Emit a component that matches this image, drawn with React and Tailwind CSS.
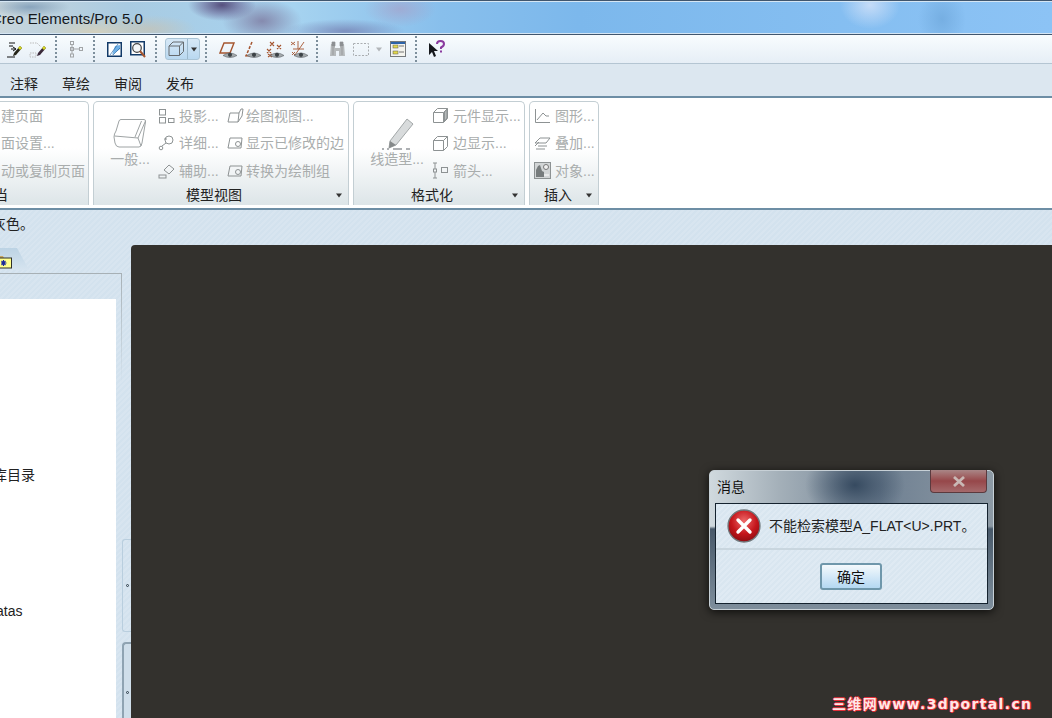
import React from "react";

const Sep = ({ m }) => (
  <div className={`w-[2px] h-[26px] border-l-2 border-dotted border-[#7d8f9c] ${m}`} />
);

const Eye = () => (
  <g>
    <path d="M3 13.5 Q10 8.5 17 13.5 Q10 17.5 3 13.5Z" fill="#a3a9ac" stroke="#5a6064" strokeWidth=".6" />
    <circle cx="10" cy="12.8" r="2.1" fill="#3c4246" />
  </g>
);

const Arrow = ({ className = "" }) => (
  <svg width="8" height="5" viewBox="0 0 8 5" className={className}>
    <path d="M1 0.5H7L4 4.5Z" fill="#333" />
  </svg>
);

const RibbonIcons = {
  proj: (
    <svg width="17" height="16" viewBox="0 0 17 16" fill="none" stroke="#8d9293">
      <rect x="1.5" y="1.5" width="6" height="5.5" />
      <rect x="1.5" y="9.5" width="6" height="5.5" />
      <rect x="10.5" y="10.5" width="5.5" height="4" />
    </svg>
  ),
  detail: (
    <svg width="17" height="16" viewBox="0 0 17 16" fill="none" stroke="#8d9293">
      <circle cx="11" cy="5" r="4" />
      <circle cx="3" cy="13" r="1.8" />
      <path d="M4 11 L8 8 M6 4 h3" />
    </svg>
  ),
  aux: (
    <svg width="17" height="16" viewBox="0 0 17 16" fill="none" stroke="#8d9293">
      <path d="M6 7 L11 2 L16 6 L11 11Z" />
      <rect x="1" y="12" width="7" height="3" />
    </svg>
  ),
  draw: (
    <svg width="17" height="16" viewBox="0 0 17 16" fill="none" stroke="#8d9293">
      <path d="M3 5 H12 L11 14 H1Z" />
      <path d="M12 5 L14 1 H16 L15 8 L11 14" />
    </svg>
  ),
  box: (
    <svg width="17" height="16" viewBox="0 0 17 16" fill="none" stroke="#8d9293">
      <path d="M3 3 H15 L14 13 H1Z" />
      <circle cx="11" cy="9" r="2.5" />
    </svg>
  ),
  comp: (
    <svg width="17" height="17" viewBox="0 0 17 17" fill="none" stroke="#8d9293">
      <path d="M1.5 5.5 L5.5 1.5 H15.5 V11.5 L11.5 15.5 H1.5Z" />
      <path d="M1.5 5.5 H11.5 V15.5 M11.5 5.5 L15.5 1.5" />
      <path d="M12.5 5 L15 2.5 V11 L12.5 14Z" fill="#b5b9ba" />
    </svg>
  ),
  edge: (
    <svg width="17" height="17" viewBox="0 0 17 17" fill="none" stroke="#8d9293">
      <path d="M1.5 5.5 L5.5 1.5 H15.5 V11.5 L11.5 15.5 H1.5Z" />
      <path d="M1.5 5.5 H11.5 V15.5 M11.5 5.5 L15.5 1.5" />
    </svg>
  ),
  arrow: (
    <svg width="17" height="17" viewBox="0 0 17 17" fill="none" stroke="#8d9293">
      <path d="M5 1 H1 M3 1 V7 M3 10 V16 M5 16 H1" />
      <rect x="1.5" y="7" width="3" height="3" />
      <rect x="9.5" y="5.5" width="6" height="5" />
    </svg>
  ),
  graph: (
    <svg width="17" height="16" viewBox="0 0 17 16" fill="none" stroke="#8d9293">
      <path d="M1.5 1 V14.5 H16" />
      <path d="M3 12 L9 5 L12 8 L15 8" />
    </svg>
  ),
  overlay: (
    <svg width="17" height="16" viewBox="0 0 17 16" fill="none" stroke="#8d9293">
      <path d="M1 8 L6 3 H16 L12 8Z" />
      <path d="M1 11 L5 7 M4 11 H13 M2 14 H11" />
    </svg>
  ),
  obj: (
    <svg width="17" height="17" viewBox="0 0 17 17">
      <rect x="0.5" y="0.5" width="16" height="16" fill="#d2d5d6" stroke="#8d9293" />
      <circle cx="12" cy="5" r="2.5" fill="#f0f0f0" stroke="#777" />
      <path d="M2 15 V8 L4 4 L6 3 L8 9 L10 10 V15Z" fill="#777c7d" />
      <path d="M10 13 H15" stroke="#fff" />
    </svg>
  ),
};

const Row = ({ icon, text, iw = "w-[21px]" }) => (
  <div className="flex items-center h-[27.5px] whitespace-nowrap">
    <span className={`${iw} shrink-0 flex`}>{icon}</span>
    <span>{text}</span>
  </div>
);

const Group = ({ w, ml = "ml-[4px]", title, arrow, titleClass, children }) => (
  <div
    className={`${w} ${ml} shrink-0 h-[104px] flex flex-col rounded-t-[5px] border border-b-0 border-[#c3ced3] bg-gradient-to-b from-white from-[45%] to-[#dde5e8] text-[#a9adad]`}
  >
    <div className="h-[83px] flex">{children}</div>
    <div className={`relative flex-1 flex items-center text-[#222] ${titleClass}`}>
      <span>{title}</span>
      {arrow}
    </div>
  </div>
);

export default function App() {
  return (
    <div className="relative w-[1052px] h-[718px] overflow-hidden flex flex-col bg-[#d6e4ef] text-[14px] leading-none font-['Liberation_Sans','Noto_Sans_CJK_SC',sans-serif]">
      {/* wallpaper title bar */}
      <div className="h-[35px] shrink-0 flex items-center pt-[1px] border-y border-[#40566e] shadow-[inset_0_1px_0_#d5e6f4,inset_0_-1px_0_#d5e6f4] bg-[radial-gradient(ellipse_34px_16px_at_222px_4px,#56507e_0%,#6e6c9a99_55%,transparent_100%),radial-gradient(ellipse_40px_22px_at_262px_20px,#7d799fcc_0%,transparent_100%),radial-gradient(ellipse_60px_12px_at_345px_30px,#6f76aab0_0%,transparent_100%),radial-gradient(ellipse_36px_18px_at_400px_8px,#a89cc499_0%,transparent_100%),radial-gradient(ellipse_46px_14px_at_150px_28px,#c9c2b0aa_0%,transparent_100%),radial-gradient(ellipse_40px_10px_at_30px_6px,#7a98b4cc_0%,transparent_100%),radial-gradient(ellipse_60px_18px_at_95px_32px,#dcd0b2cc_0%,transparent_100%),radial-gradient(ellipse_30px_24px_at_870px_4px,#cfe0f8dd_0%,transparent_100%),radial-gradient(ellipse_24px_30px_at_942px_18px,#6fa8dcbb_0%,transparent_100%),linear-gradient(90deg,#c9d6dc_0%,#a9cbe2_12%,#a6d3f0_28%,#88bfec_42%,#7cb8ec_55%,#8cc3f5_100%)]">
        <span className="-ml-[9px] text-[15px] text-[#15181c] whitespace-nowrap">Creo Elements/Pro 5.0</span>
      </div>

      {/* toolbar */}
      <div className="h-[29px] shrink-0 flex items-center border-b border-[#b4c5d2] bg-gradient-to-b from-[#f8fcfe] to-[#e6eef6]">
        <svg width="17" height="17" viewBox="0 0 17 17" className="ml-[6px]">
          <path d="M3 2 H9 M3 5 H7 M1 16 H9 M5 8 H9 M7 6 L10 8 L7 10" stroke="#111" fill="none" />
          <path d="M8 12 L14 5 L16 7 L10 14 L7 15Z" fill="#26261a" />
          <path d="M12 7 L14 5 L16 7 L14 9Z" fill="#d5d622" />
        </svg>
        <svg width="18" height="17" viewBox="0 0 18 17" className="ml-[6px]">
          <path d="M1 2 H8 L12 6 M1 12 H7 V16 H1Z" stroke="#bbb" fill="none" strokeDasharray="1.5 1" />
          <path d="M9 12 L15 5 L17 7 L11 14 L8 15Z" fill="#3a2a3a" />
          <path d="M13 7 L15 5 L17 7 L15 9Z" fill="#d5d622" />
        </svg>
        <Sep m="ml-[8px]" />
        <svg width="15" height="17" viewBox="0 0 15 17" fill="none" stroke="#a2a5a7" className="ml-[12px]">
          <rect x="1.5" y="0.5" width="3" height="3" />
          <rect x="1.5" y="6.5" width="3" height="3" />
          <rect x="1.5" y="13" width="3" height="3" />
          <rect x="10.5" y="6.5" width="3" height="3" />
          <path d="M3 4 V13 M5 8 H10" />
        </svg>
        <Sep m="ml-[9px]" />
        <svg width="15" height="15" viewBox="0 0 15 15" className="ml-[12px]">
          <rect x="0.75" y="0.75" width="13.5" height="13.5" fill="#fff" stroke="#123a68" strokeWidth="1.5" />
          <path d="M5 13 L8 4 L13 3 V7 Z" fill="#6fb0e6" />
          <path d="M3 13 L11 2 M6 13 L13 6" stroke="#2b6ca8" strokeWidth=".7" />
        </svg>
        <svg width="16" height="17" viewBox="0 0 16 17" className="ml-[8px]">
          <rect x="0.75" y="0.75" width="13.5" height="13" fill="#fff" stroke="#123a68" strokeWidth="1.5" />
          <circle cx="7" cy="7" r="4.3" fill="#f4f7f9" stroke="#444" strokeWidth="1.2" />
          <path d="M10 10 L15 16" stroke="#a5552f" strokeWidth="2" />
        </svg>
        <Sep m="ml-[9px]" />
        <div className="ml-[8px] w-[35px] h-[22px] flex rounded-[3px] border border-[#a9c4d6] bg-gradient-to-b from-[#d6e8f6] to-[#b9d8f0]">
          <div className="w-[22px] flex items-center justify-center border-r border-[#9bb8cc]">
            <svg width="17" height="16" viewBox="0 0 17 16" fill="none" stroke="#666b6f">
              <path d="M1 5 L5 1 H15.5 V10.5 L11.5 14.5 H1Z" />
              <path d="M1 5 H11.5 V14.5 M11.5 5 L15.5 1" />
            </svg>
          </div>
          <div className="flex-1 flex items-center justify-center"><Arrow /></div>
        </div>
        <Sep m="ml-[5px]" />
        <svg width="18" height="17" viewBox="0 0 18 17" className="ml-[12px]">
          <path d="M5 2 H15 L11 12 H1Z" fill="none" stroke="#a5552f" strokeWidth="1.4" />
          <g transform="translate(1,1)"><Eye /></g>
        </svg>
        <svg width="17" height="17" viewBox="0 0 17 17" className="ml-[7px]">
          <path d="M8 1 L2 15" stroke="#a5552f" strokeWidth="1.5" strokeDasharray="3 1.5" />
          <path d="M1 15 H7" stroke="#a5552f" />
          <g transform="translate(0,1)"><Eye /></g>
        </svg>
        <svg width="18" height="17" viewBox="0 0 18 17" className="ml-[5px]">
          <path d="M4 1 L8 5 M8 1 L4 5 M11 4 L15 8 M15 4 L11 8 M1 8 L5 12 M5 8 L1 12 M2 13 L6 16 M6 13 L2 16" stroke="#a5552f" strokeWidth="1.1" />
          <g transform="translate(1,1)"><Eye /></g>
        </svg>
        <svg width="18" height="17" viewBox="0 0 18 17" className="ml-[6px]">
          <path d="M1 1 L5 4 M5 1 L1 4 M8 0 V8 M3 8 H14 M14 1 L5 14 M2 11 L5 14 M5 11 L2 14" stroke="#a5552f" strokeWidth=".9" />
          <g transform="translate(1,1)"><Eye /></g>
        </svg>
        <Sep m="ml-[8px]" />
        <svg width="17" height="17" viewBox="0 0 17 17" className="ml-[11px]">
          <path d="M2 3 H6 V7 H11 V3 H15 L16 15 H10 V10 H7 V15 H1Z" fill="#b5b9bb" />
          <path d="M3 1 H6 V5 H3Z M11 1 H14 V5 H11Z M4 6 V14 M13 6 V14" fill="#8c9092" stroke="#8c9092" strokeWidth=".7" />
        </svg>
        <svg width="16" height="13" viewBox="0 0 16 13" fill="none" stroke="#a9adb0" strokeDasharray="2 1.5" className="ml-[7px]">
          <rect x="0.5" y="0.5" width="15" height="12" />
        </svg>
        <svg width="8" height="5" viewBox="0 0 8 5" className="ml-[6px]"><path d="M1 0.5H7L4 4.5Z" fill="#b2b6b9" /></svg>
        <svg width="16" height="16" viewBox="0 0 16 16" className="ml-[7px]">
          <rect x="0.5" y="0.5" width="15" height="15" fill="#f4f4ee" stroke="#75797c" />
          <rect x="1" y="1" width="14" height="2" fill="#2c63a8" />
          <rect x="3" y="4" width="5" height="3" fill="#e3d94a" stroke="#555" strokeWidth=".5" />
          <rect x="3" y="10" width="5" height="3" fill="#e3d94a" stroke="#555" strokeWidth=".5" />
          <path d="M9 5 H14 M9 11 H14" stroke="#777" />
        </svg>
        <Sep m="ml-[9px]" />
        <svg width="18" height="18" viewBox="0 0 18 18" className="ml-[11px]">
          <path d="M1 3 L10 11 H6 L8 16 L6 17 L4 12 L1 15Z" fill="#15181c" />
          <path d="M9 4 Q9 1 12.5 1 Q16 1 16 4 Q16 6 13 7.5 V9" fill="none" stroke="#8a3a9e" strokeWidth="2" />
          <rect x="12" y="10.5" width="2" height="2" fill="#8a3a9e" />
        </svg>
      </div>

      {/* tabs */}
      <div className="h-[34px] shrink-0 flex items-center gap-[24px] pl-[10px] pt-[7px] bg-[#dce7f0] border-b-2 border-[#6d8ea5] text-[#222]">
        <span>注释</span>
        <span>草绘</span>
        <span>审阅</span>
        <span>发布</span>
      </div>

      {/* ribbon */}
      <div className="h-[112px] shrink-0 flex items-start pt-[3px] bg-white border-b-2 border-[#6d8ea5]">
        <Group w="w-[96px]" ml="-ml-[7px]" title="当" titleClass="">
          <div className="pl-[7px] whitespace-nowrap">
            <div className="flex items-center h-[27.5px]">建页面</div>
            <div className="flex items-center h-[27.5px]">面设置...</div>
            <div className="flex items-center h-[27.5px]">动或复制页面</div>
          </div>
        </Group>
        <Group
          w="w-[256px]"
          title="模型视图"
          titleClass="justify-center pr-[14px]"
          arrow={<Arrow className="absolute right-[5px] top-[8px]" />}
        >
          <div className="w-[64px] shrink-0 flex flex-col items-center pt-[16px] pl-[8px]">
            <svg width="34" height="31" viewBox="0 0 34 31" fill="none" stroke="#9ea3a4">
              <path d="M8 1.5 H31 Q33 1.5 32.5 4 L29 25 Q28.5 29 26 29 H6 Q3 29 2 25 L1 19 Q1 16 3 13 L6 3 Q6.5 1.5 8 1.5Z" />
              <path d="M1.5 18 L25 20 L28 28 M25 20 L32.5 3 M28.5 3 L22 19" />
            </svg>
            <span className="mt-[3px] whitespace-nowrap">一般...</span>
          </div>
          <div className="w-[69px] shrink-0">
            <Row icon={RibbonIcons.proj} text="投影..." />
            <Row icon={RibbonIcons.detail} text="详细..." />
            <Row icon={RibbonIcons.aux} text="辅助..." />
          </div>
          <div>
            <Row icon={RibbonIcons.draw} iw="w-[19px]" text="绘图视图..." />
            <Row icon={RibbonIcons.box} iw="w-[19px]" text="显示已修改的边" />
            <Row icon={RibbonIcons.box} iw="w-[19px]" text="转换为绘制组" />
          </div>
        </Group>
        <Group
          w="w-[172px]"
          title="格式化"
          titleClass="justify-center pr-[14px]"
          arrow={<Arrow className="absolute right-[5px] top-[8px]" />}
        >
          <div className="w-[78px] shrink-0 flex flex-col items-center pt-[15px] pl-[8px]">
            <svg width="34" height="34" viewBox="0 0 34 34">
              <path d="M10 24 L27 2 L33 7 L16 28 L9 31Z" fill="#d8dbdc" stroke="#a2a7a8" />
              <path d="M10 24 L16 28 L9 31Z" fill="#85898a" />
              <path d="M2 32 H4 M7 32 H9 M13 32 H22 M26 32 H30" stroke="#93979a" strokeWidth="1.5" />
            </svg>
            <span className="mt-[1px] whitespace-nowrap">线造型...</span>
          </div>
          <div>
            <Row icon={RibbonIcons.comp} text="元件显示..." />
            <Row icon={RibbonIcons.edge} text="边显示..." />
            <Row icon={RibbonIcons.arrow} text="箭头..." />
          </div>
        </Group>
        <Group
          w="w-[70px]"
          title="插入"
          titleClass="pl-[14px]"
          arrow={<Arrow className="absolute right-[5px] top-[8px]" />}
        >
          <div className="pl-[4px]">
            <Row icon={RibbonIcons.graph} text="图形..." />
            <Row icon={RibbonIcons.overlay} text="叠加..." />
            <Row icon={RibbonIcons.obj} text="对象..." />
          </div>
        </Group>
      </div>

      {/* striped workspace */}
      <div className="flex-1 min-h-0 flex flex-col bg-[repeating-linear-gradient(135deg,#d3e2ee_0px,#d3e2ee_2px,#d8e5f0_2px,#d8e5f0_4px)]">
        <div className="h-[35px] shrink-0 flex items-center -ml-[8px] pb-[7px] text-[#222] whitespace-nowrap">灰色。</div>
        <div className="flex-1 min-h-0 flex">
          <div className="w-[122px] shrink-0 flex flex-col">
            <div className="h-[28px] shrink-0 pt-[3px] relative">
              <div className="w-[29px] h-[22px] bg-gradient-to-b from-[#bcd3e4] to-[#d6e4ef] [clip-path:polygon(0_0,17px_0,29px_100%,0_100%)]" />
              <svg width="13" height="14" viewBox="0 0 13 14" className="absolute left-0 top-[10px]">
                <path d="M0 3 V1 H3 L4 3Z" fill="#c7a765" />
                <rect x="-1" y="3" width="12.5" height="10" fill="#ffff8c" stroke="#30302a" />
                <path d="M3.5 5 V11 M1 8 H6.5 M1.5 6 L5.5 10 M5.5 6 L1.5 10" stroke="#1c2a9a" strokeWidth="1.1" />
              </svg>
            </div>
            <div className="relative flex-1 min-h-0 flex flex-col border-t border-[#a7b0b5]">
              <div className="absolute right-0 -top-px w-px h-[110px] rounded-tr-[3px] bg-gradient-to-b from-[#a7b0b5] to-transparent" />
              <div className="h-[25px] shrink-0" />
              <div className="w-[116px] flex-1 bg-white text-[#222] whitespace-nowrap">
                <div className="-ml-[7px] mt-[169px]">库目录</div>
                <div className="-ml-[4px] mt-[122px]">atas</div>
              </div>
            </div>
          </div>
          <div className="w-[9px] shrink-0 pt-[294px] flex flex-col gap-[10px]">
            <div className="h-[93px] shrink-0 flex items-center justify-center rounded-l-[3px] border border-r-0 border-[#b9cede]">
              <span className="w-[3px] h-[3px] rounded-full border border-[#2c3c48]" />
            </div>
            <div className="flex-1 pt-[47px] flex justify-center rounded-tl-[4px] border-l-2 border-t-2 border-[#8fa3b2] bg-[#cfdeea]">
              <span className="w-[3px] h-[3px] rounded-full border border-[#2c3c48]" />
            </div>
          </div>
          <div className="flex-1 rounded-tl-[4px] bg-[#33312d]" />
        </div>
      </div>

      {/* dialog */}
      <div className="absolute left-[709px] top-[470px] w-[285px] h-[140px] flex flex-col rounded-[5px] border border-[#c7d0d6] shadow-[0_2px_10px_rgba(0,0,0,0.75)] bg-[radial-gradient(ellipse_50px_36px_at_145px_14px,#364a60_0%,transparent_100%),linear-gradient(180deg,transparent_40%,#48596a_42%,#7e8e9c_100%),linear-gradient(90deg,#d0d9de_0%,#a3afb8_25%,#6f8092_60%,#8c99a4_100%)]">
        <div className="h-[32px] shrink-0 flex items-center pl-[7px] text-[#111]">消息</div>
        <div className="absolute right-[6px] -top-px w-[57px] h-[23px] flex items-center justify-center rounded-b-[4px] border border-t-0 border-[#5b3a3e] bg-gradient-to-b from-[#a98687] via-[#96474a] to-[#a56a6c]">
          <svg width="14" height="11" viewBox="0 0 14 11">
            <path d="M2 1 L12 10 M12 1 L2 10" stroke="#c9b8b5" strokeWidth="2.8" />
          </svg>
        </div>
        <div className="mx-[5px] mb-[5px] flex-1 flex flex-col border border-[#14222e] bg-[repeating-linear-gradient(135deg,#d9e6f0_0px,#d9e6f0_2px,#dfeaf3_2px,#dfeaf3_4px)] text-[#222]">
          <div className="h-[46px] shrink-0 flex items-center pl-[11px] border-b-2 border-[#c9d6df]">
            <svg width="34" height="34" viewBox="0 0 34 34">
              <defs>
                <radialGradient id="err" cx="50%" cy="35%" r="65%">
                  <stop offset="0%" stopColor="#ee6a6a" />
                  <stop offset="60%" stopColor="#c5161c" />
                  <stop offset="100%" stopColor="#8e0d12" />
                </radialGradient>
              </defs>
              <circle cx="17" cy="17" r="16" fill="url(#err)" stroke="#70787c" strokeWidth="1.3" />
              <path d="M11 11 L23 23 M23 11 L11 23" stroke="#fff" strokeWidth="3.4" strokeLinecap="round" />
            </svg>
            <span className="ml-[8px] whitespace-nowrap">不能检索模型A_FLAT&lt;U&gt;.PRT。</span>
          </div>
          <div className="flex-1 flex justify-center items-start pt-[13px] pr-[1px]">
            <button className="w-[62px] h-[27px] rounded-[3px] border-2 border-[#6f97ab] bg-gradient-to-b from-[#f4f9fc] to-[#b4d8f2] text-[14px] text-[#111]">确定</button>
          </div>
        </div>
      </div>

      {/* watermark */}
      <div className="absolute left-[832px] top-[697px] text-[14px] font-bold tracking-[1.35px] whitespace-nowrap text-[#ffe6e6] font-['DejaVu_Sans','Noto_Sans_CJK_SC',sans-serif] [text-shadow:1px_0_0_#e0303a,-1px_0_0_#e0303a,0_1px_0_#e0303a,0_-1px_0_#e0303a]">
        三维网www.3dportal.cn
      </div>
    </div>
  );
}
